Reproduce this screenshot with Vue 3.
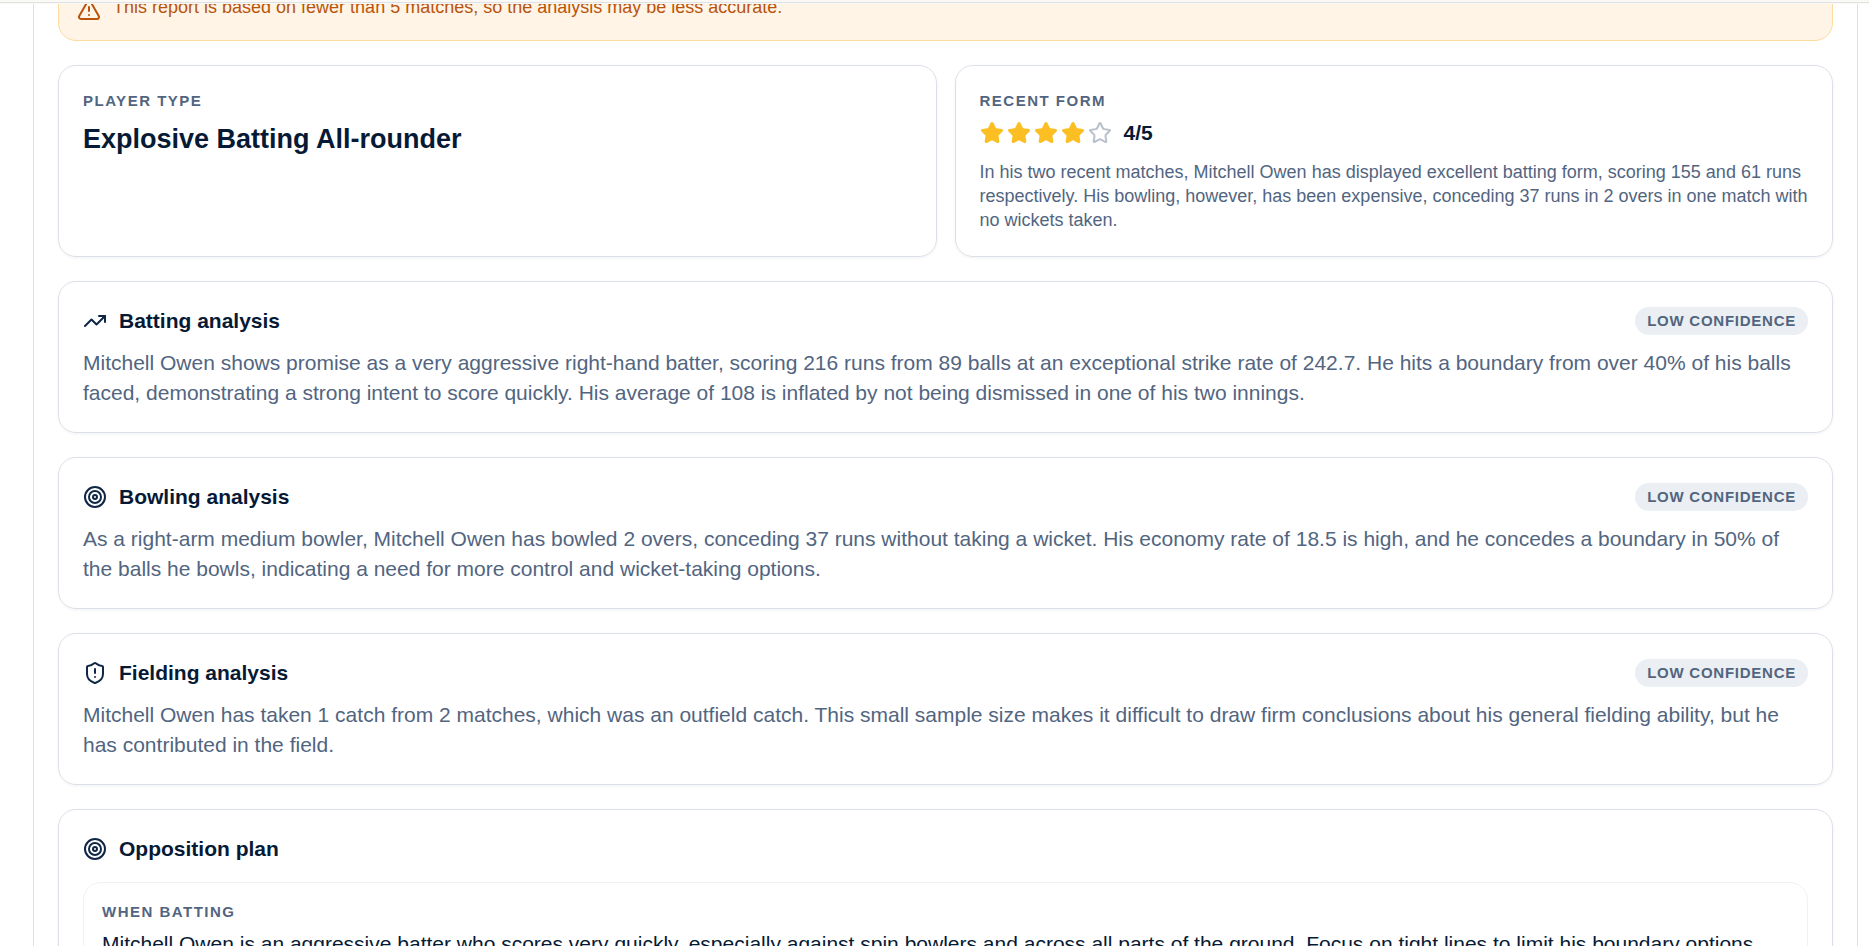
<template>
  <div class="page">
    <header class="topbar"></header>
    <main class="panel">
      <div class="alert" role="alert">
        <svg class="icon alert-icon" viewBox="0 0 24 24" aria-hidden="true">
          <path d="m21.73 18-8-14a2 2 0 0 0-3.48 0l-8 14A2 2 0 0 0 4 21h16a2 2 0 0 0 1.73-3" />
          <path d="M12 9v4" />
          <path d="M12 17h.01" />
        </svg>
        <p class="small">This report is based on fewer than 5 matches, so the analysis may be less accurate.</p>
      </div>

      <div class="summary">
        <section class="card">
          <p class="label">Player type</p>
          <h2 class="player-type">{{ report.playerType }}</h2>
        </section>

        <section class="card">
          <p class="label">Recent form</p>
          <div class="rating">
            <div class="stars">
              <svg
                v-for="n in 5"
                :key="n"
                class="icon star"
                :class="{ filled: n <= report.rating }"
                viewBox="0 0 24 24"
                aria-hidden="true"
              >
                <path d="M11.525 2.295a.53.53 0 0 1 .95 0l2.31 4.679a2.123 2.123 0 0 0 1.595 1.16l5.166.756a.53.53 0 0 1 .294.904l-3.736 3.638a2.123 2.123 0 0 0-.611 1.878l.882 5.14a.53.53 0 0 1-.771.56l-4.618-2.428a2.122 2.122 0 0 0-1.973 0L6.396 21.01a.53.53 0 0 1-.77-.56l.881-5.139a2.122 2.122 0 0 0-.611-1.879L2.16 9.795a.53.53 0 0 1 .294-.906l5.165-.755a2.122 2.122 0 0 0 1.597-1.16z" />
              </svg>
            </div>
            <span class="score">{{ report.rating }}/5</span>
          </div>
          <p class="small muted">{{ report.form }}</p>
        </section>
      </div>

      <section v-for="item in report.analyses" :key="item.title" class="card">
        <div class="card-head">
          <svg class="icon" viewBox="0 0 24 24" aria-hidden="true">
            <path v-for="d in icons[item.icon]" :key="d" :d="d" />
          </svg>
          <h3>{{ item.title }}</h3>
          <span class="badge">{{ item.confidence }} confidence</span>
        </div>
        <p class="body muted">{{ item.text }}</p>
      </section>

      <section class="card">
        <div class="card-head plan-head">
          <svg class="icon" viewBox="0 0 24 24" aria-hidden="true">
            <path v-for="d in icons.target" :key="d" :d="d" />
          </svg>
          <h3>Opposition plan</h3>
        </div>
        <div class="plan">
          <p class="label">When batting</p>
          <p class="body">{{ report.plan }}</p>
        </div>
      </section>
    </main>
  </div>
</template>

<script setup>
const icons = {
  trend: ['M16 7h6v6', 'm22 7-8.5 8.5-5-5L2 17'],
  target: [
    'M2 12a10 10 0 1 0 20 0a10 10 0 1 0-20 0',
    'M6 12a6 6 0 1 0 12 0a6 6 0 1 0-12 0',
    'M10 12a2 2 0 1 0 4 0a2 2 0 1 0-4 0'
  ],
  shield: [
    'M20 13c0 5-3.5 7.5-7.66 8.95a1 1 0 0 1-.67-.01C7.5 20.5 4 18 4 13V6a1 1 0 0 1 1-1c2 0 4.5-1.2 6.24-2.72a1.17 1.17 0 0 1 1.52 0C14.51 3.81 17 5 19 5a1 1 0 0 1 1 1z',
    'M12 8v4',
    'M12 16h.01'
  ]
}

const report = {
  playerType: 'Explosive Batting All-rounder',
  rating: 4,
  form: 'In his two recent matches, Mitchell Owen has displayed excellent batting form, scoring 155 and 61 runs respectively. His bowling, however, has been expensive, conceding 37 runs in 2 overs in one match with no wickets taken.',
  analyses: [
    {
      title: 'Batting analysis',
      icon: 'trend',
      confidence: 'Low',
      text: 'Mitchell Owen shows promise as a very aggressive right-hand batter, scoring 216 runs from 89 balls at an exceptional strike rate of 242.7. He hits a boundary from over 40% of his balls faced, demonstrating a strong intent to score quickly. His average of 108 is inflated by not being dismissed in one of his two innings.'
    },
    {
      title: 'Bowling analysis',
      icon: 'target',
      confidence: 'Low',
      text: 'As a right-arm medium bowler, Mitchell Owen has bowled 2 overs, conceding 37 runs without taking a wicket. His economy rate of 18.5 is high, and he concedes a boundary in 50% of the balls he bowls, indicating a need for more control and wicket-taking options.'
    },
    {
      title: 'Fielding analysis',
      icon: 'shield',
      confidence: 'Low',
      text: 'Mitchell Owen has taken 1 catch from 2 matches, which was an outfield catch. This small sample size makes it difficult to draw firm conclusions about his general fielding ability, but he has contributed in the field.'
    }
  ],
  plan: 'Mitchell Owen is an aggressive batter who scores very quickly, especially against spin bowlers and across all parts of the ground. Focus on tight lines to limit his boundary options.'
}
</script>

<style>
body {
  background: #fff;
}
</style>

<style scoped>
.page {
  height: 100vh;
  overflow: hidden;
  font-family: "Liberation Sans", Arial, sans-serif;
  color: #071a35;
}

.topbar {
  position: relative;
  z-index: 1;
  box-sizing: border-box;
  height: 3px;
  background: #faf9f6;
  border-bottom: 1px solid #dfe1e2;
  box-shadow: 0 1px 0 #faf9f6;
}

/* the report is scrolled so that its top edge sits behind the bar */
.panel {
  display: flex;
  flex-direction: column;
  gap: 24px;
  margin: -52px 11px 0 33px;
  padding: 24px;
  border: 1px solid #dbe0e8;
}

p,
h2,
h3 {
  margin: 0;
}

.icon {
  flex: none;
  width: 24px;
  height: 24px;
  fill: none;
  stroke: #0f2747;
  stroke-width: 2;
  stroke-linecap: round;
  stroke-linejoin: round;
}

.alert {
  display: flex;
  align-items: flex-start;
  gap: 12px;
  padding: 18px;
  border: 1px solid #fbdc9d;
  border-radius: 18px;
  background: #fff4e5;
  color: #b9540c;
}

.alert-icon {
  margin-top: 3px;
  stroke: #b9540c;
}

.summary {
  display: grid;
  grid-template-columns: 1fr 1fr;
  gap: 18px;
}

.card {
  padding: 24px;
  border: 1px solid #dbe0e8;
  border-radius: 18px;
  box-shadow: 0 1px 3px rgba(15, 39, 71, 0.06);
}

.label {
  margin-bottom: 6px;
  font-size: 15px;
  font-weight: 700;
  line-height: 22px;
  letter-spacing: 0.1em;
  text-transform: uppercase;
  color: #52657f;
}

.player-type {
  font-size: 27px;
  line-height: 42px;
}

.rating {
  display: flex;
  align-items: center;
  gap: 12px;
  margin-bottom: 12px;
}

.stars {
  display: flex;
  gap: 3px;
}

.star {
  stroke: #b9c1cb;
}

.star.filled {
  fill: #fbbf24;
  stroke: #fbbf24;
}

.score {
  font-size: 21px;
  font-weight: 700;
  line-height: 30px;
}

.small {
  font-size: 18px;
  line-height: 24px;
}

.body {
  font-size: 21px;
  line-height: 30px;
}

.muted {
  color: #52657f;
}

.card-head {
  display: flex;
  align-items: center;
  gap: 12px;
  margin-bottom: 12px;
}

.card-head h3 {
  flex: 1;
  font-size: 21px;
  line-height: 30px;
}

.plan-head {
  margin-bottom: 18px;
}

.badge {
  padding: 0 12px;
  border-radius: 14px;
  background: #ebeff3;
  font-size: 15px;
  font-weight: 700;
  line-height: 28px;
  letter-spacing: 0.05em;
  text-transform: uppercase;
  color: #52657f;
}

.plan {
  padding: 18px;
  border: 1px solid #f0f1f3;
  border-radius: 18px;
}
</style>
